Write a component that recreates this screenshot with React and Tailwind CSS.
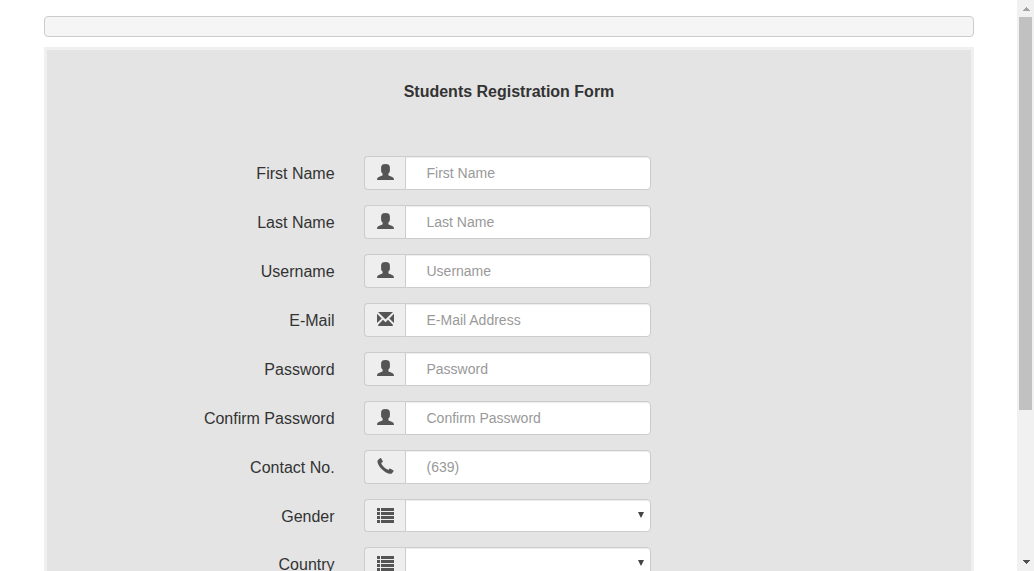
import React from "react";

function UserIcon() {
  return (
    <svg width="17" height="16" viewBox="0 0 17 16" fill="#555" className="block">
      <path d="M8.5 0C11.4 0 12.9 1.2 12.9 3.4V6.6C12.9 8 12.3 9 11.4 9.6V10.9C11.5 11.5 12.4 11.8 13.6 12.3C15.9 13.2 16.9 13.8 17 16H0C.1 13.8 1.1 13.2 3.4 12.3C4.6 11.8 5.5 11.5 5.6 10.9V9.6C4.7 9 4.1 8 4.1 6.6V3.4C4.1 1.2 5.6 0 8.5 0Z" />
    </svg>
  );
}

function MailIcon() {
  return (
    <svg width="17" height="14" viewBox="0 0 17 14" fill="#555" className="block">
      <path d="M1 0H16L8.5 7.3ZM0 1.8L4.7 6.4L0 11.1ZM17 1.8V11.1L12.3 6.4ZM6 7.8L8.5 10.2L11 7.8L15.8 12.7V14H1.2V12.7Z" />
    </svg>
  );
}

function PhoneIcon() {
  return (
    <svg width="17" height="16" viewBox="0 0 17 16" fill="#555" className="block">
      <path d="M0.9 2L3.1 0.2C3.5-.1 3.9 0 4.2.4L5.7 3.1C5.9 3.5 5.8 4 5.4 4.3L4.2 5.1C4.9 7.6 8.4 11 11.4 11.9L12.2 10.9C12.5 10.5 13 10.4 13.4 10.7L16.2 12.3C16.6 12.6 16.7 13.1 16.4 13.5L14.8 15.4C13.4 16.4 10.4 15.3 8.2 13.9C5.2 12 2.5 9.3 1.2 6.3C.5 4.7 .1 3 .9 2Z" />
    </svg>
  );
}

function ListIcon() {
  return (
    <svg width="17" height="15" viewBox="0 0 17 15" fill="#555" className="block">
      <path d="M0 0h3v3H0zM4 0h13v3H4zM0 4h3v3H0zM4 4h13v3H4zM0 8h3v3H0zM4 8h13v3H4zM0 12h3v3H0zM4 12h13v3H4z" />
    </svg>
  );
}

const fields = [
  { label: "First Name", hint: "First Name", Icon: UserIcon },
  { label: "Last Name", hint: "Last Name", Icon: UserIcon },
  { label: "Username", hint: "Username", Icon: UserIcon },
  { label: "E-Mail", hint: "E-Mail Address", Icon: MailIcon },
  { label: "Password", hint: "Password", Icon: UserIcon },
  { label: "Confirm Password", hint: "Confirm Password", Icon: UserIcon },
  { label: "Contact No.", hint: "(639)", Icon: PhoneIcon },
  { label: "Gender", select: true, Icon: ListIcon },
  { label: "Country", select: true, Icon: ListIcon },
];

function Field({ label, hint, select, Icon }) {
  return (
    <div className={"mb-[15px] flex shrink-0 " + (select ? "h-[33px]" : "h-[34px]")}>
      <label className="mr-[29.4px] w-[287.6px] pt-[6px] text-right text-[16px] leading-[23px]">{label}</label>
      <div className="flex w-[287px]">
        <span className="flex w-[41px] shrink-0 justify-center rounded-l-[4px] border border-r-0 border-[#ccc] bg-[#eee] pl-px">
          <span className={Icon === MailIcon || select ? "mt-[8px]" : "mt-[7px]"}>
            <Icon />
          </span>
        </span>
        {select ? (
          <div className="flex flex-1 justify-end rounded-r-[4px] border border-[#ccc] bg-white pr-[6px] pt-[12px] shadow-[inset_0_1px_1px_rgba(0,0,0,0.075)]">
            <svg width="6" height="6" viewBox="0 0 6 6" fill="#444">
              <path d="M0 0H6L3.3 5.6H2.7Z" />
            </svg>
          </div>
        ) : (
          <input
            type="text"
            placeholder={hint}
            className="min-w-0 flex-1 rounded-r-[4px] border border-[#ccc] bg-white pl-[20.5px] pr-[20px] text-[14px] leading-[20px] text-[#555] shadow-[inset_0_1px_1px_rgba(0,0,0,0.075)] outline-none placeholder:text-[#999]"
          />
        )}
      </div>
    </div>
  );
}

export default function App() {
  return (
    <div className="flex h-[571px] w-[1034px] overflow-hidden bg-white font-['Liberation_Sans',Arial,sans-serif] text-[#333]">
      <main className="flex h-full w-[1017px] flex-col overflow-hidden pl-[44px] pr-[43px] pt-[16px]">
        <div className="h-[21px] shrink-0 rounded-[4px] border border-[#ccc] bg-[#f5f5f5]" />
        <form className="mt-[10px] flex h-[700px] shrink-0 flex-col border-[3px] border-[#f0f0f0] bg-[#e4e4e4]">
          <h1 className="mt-[30px] h-[76px] shrink-0 text-center text-[16px] font-bold leading-[23px]">
            Students Registration Form
          </h1>
          {fields.map((field) => (
            <Field key={field.label} {...field} />
          ))}
        </form>
      </main>
      <aside className="flex h-full w-[17px] flex-col items-center bg-[#f1f1f1]">
        <div className="flex h-[17px] shrink-0 pl-px pt-[7px]">
          <svg width="7" height="4" viewBox="0 0 7 4" fill="#a3a3a3" shapeRendering="crispEdges">
            <path d="M3 0h1v1h1v1h1v1h1v1H0V3h1V2h1V1h1z" />
          </svg>
        </div>
        <div className="h-[393px] w-[13px] shrink-0 bg-[#c1c1c1]" />
        <div className="mt-auto flex h-[17px] shrink-0 pl-px pt-[6px]">
          <svg width="7" height="4" viewBox="0 0 7 4" fill="#505050" shapeRendering="crispEdges">
            <path d="M0 0h7v1H6v1H5v1H4v1H3V3H2V2H1V1H0z" />
          </svg>
        </div>
      </aside>
    </div>
  );
}
